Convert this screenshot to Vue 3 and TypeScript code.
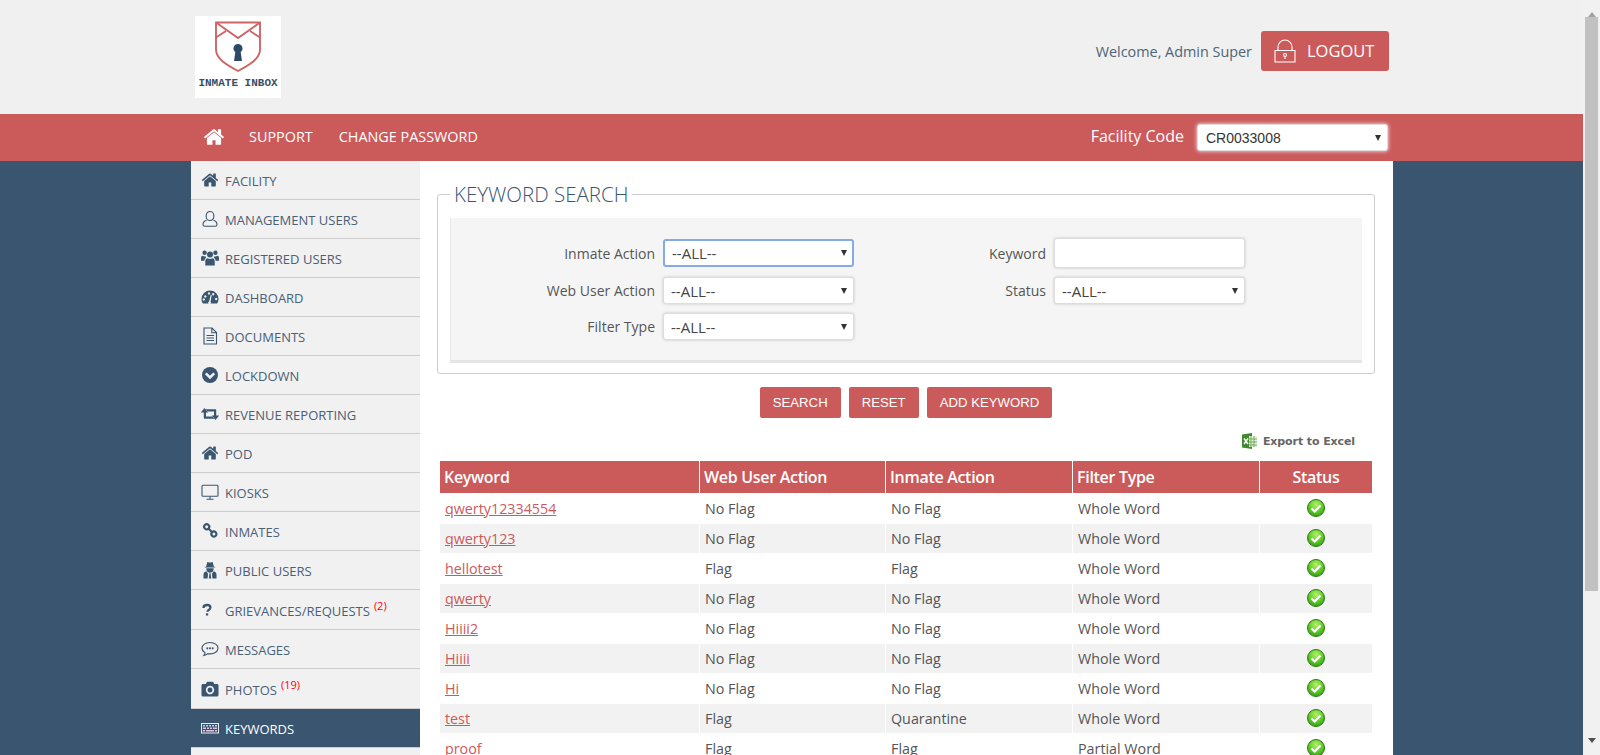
<script setup lang="ts">
type Shape = { d: string; stroke?: number; fill?: string };
type NavItem = { label: string; icon: string; count?: number; active?: boolean };
type Row = { keyword: string; web: string; inmate: string; filter: string };

const BG = '#f1f1f1';

// icons are hand drawn on an 18x18 box, the home one is on 1792 units
const HOME =
  'M1472 992v480q0 26-19 45t-45 19h-384v-384h-256v384h-384q-26 0-45-19t-19-45v-480q0-1 .5-3t.5-3l575-474 575 474q1 2 1 6zm223-69l-62 74q-8 9-21 11h-3q-13 0-21-7l-692-577-692 577q-12 8-24 7-13-2-21-11l-62-74q-8-10-7-23.5t11-21.5l719-599q32-26 76-26t76 26l244 204v-195q0-14 9-23t23-9h192q14 0 23 9t9 23v408l219 182q10 8 11 21.5t-7 23.5z';

const icons: Record<string, Shape[]> = {
  user: [
    { d: 'M9 1.500a3.800 3.800 0 0 1 3.800 3.800v1.400a3.800 3.800 0 0 1-7.600 0V5.300A3.800 3.800 0 0 1 9 1.500z', stroke: 1.1 },
    { d: 'M5.600 10.300C3.200 11 2 12.500 2 14.500c0 1.100.7 1.800 1.800 1.800h10.400c1.100 0 1.800-.7 1.800-1.800 0-2-1.200-3.500-3.600-4.200', stroke: 1.1 },
  ],
  users: [
    { d: 'M12 5.400a3 3 0 1 1-6 0 3 3 0 0 1 6 0z' },
    { d: 'M5.800 3.700a2.200 2.200 0 1 1-4.400 0 2.200 2.200 0 0 1 4.400 0zM16.600 3.700a2.200 2.200 0 1 1-4.400 0 2.200 2.200 0 0 1 4.400 0z' },
    { d: 'M4.300 16.500v-4.300c0-2 1.300-3 2.500-3 .6.500 1.300.8 2.200.8s1.600-.3 2.200-.8c1.200 0 2.500 1 2.500 3v4.300z' },
    { d: 'M0 11.800V8.800c0-1.200.8-2 1.800-2 .5.400 1.200.6 1.900.6.300 0 .6 0 .8-.1.100.700.400 1.300.8 1.800-1.200.3-1.800 1.300-1.900 2.700zM18 11.800V8.800c0-1.200-.8-2-1.800-2-.5.400-1.200.6-1.900.6-.3 0-.6 0-.8-.1-.1.700-.4 1.300-.8 1.800 1.200.3 1.800 1.300 1.900 2.700z' },
  ],
  dashboard: [
    { d: 'M9 2.500A8.500 8.500 0 0 0 .5 11c0 1.800.5 3.300 1.400 4.600h14.200c.9-1.300 1.400-2.800 1.400-4.600A8.500 8.500 0 0 0 9 2.500z' },
    { d: 'M4.300 7.300a1.200 1.200 0 1 1-.01 0zM2.800 10.300a1.200 1.200 0 1 1-.01 0zM8 4.200a1.200 1.200 0 1 1-.01 0zM12.200 5a1.200 1.200 0 1 1-.01 0zM15.200 9.800a1.200 1.200 0 1 1-.01 0z', fill: BG },
    { d: 'M8.100 13.400l1.600-6.600 1 .3-1.100 6.700a1.400 1.400 0 1 1-1.500-.4z', fill: BG },
  ],
  file: [
    { d: 'M3 1h8l4.500 4.500V17H3zM10.800 1v4.800h4.700', stroke: 1.1 },
    { d: 'M5.500 8.500h7.500M5.500 11h7.500M5.500 13.500h7.500', stroke: 1 },
  ],
  chevron: [
    { d: 'M17 9A8 8 0 1 1 1 9a8 8 0 0 1 16 0z' },
    { d: 'M4.800 7.400L9 11.400l4.200-4', stroke: 2.600, fill: BG },
  ],
  retweet: [
    { d: 'M3.500 3L7.200 7.400H5v4.100h6.400l1.900 2.300H3.700c-.5 0-.9-.4-.9-.9V7.400H-.2z' },
    { d: 'M14.500 15l-3.700-4.400H13V6.500H6.600L4.700 4.200h9.600c.5 0 .9.400.9.900v5.500h3z' },
  ],
  desktop: [
    { d: 'M1 3.300c0-.6.400-1 1-1h14c.6 0 1 .4 1 1v9c0 .6-.4 1-1 1H2c-.6 0-1-.4-1-1z', stroke: 1.1 },
    { d: 'M9 13.500v2.700M5.500 16.200h7', stroke: 1.1 },
  ],
  chain: [
    { d: 'M7.500 3c1 1 1 2.600 0 3.600s-2.600 1-3.600 0-1-2.600 0-3.600 2.600-1 3.600 0z', stroke: 2.100 },
    { d: 'M14.700 10.200c1 1 1 2.600 0 3.600s-2.600 1-3.600 0-1-2.600 0-3.600 2.600-1 3.600 0z', stroke: 2.100 },
    { d: 'M7.200 6.300l4.200 4.200', stroke: 2.100 },
  ],
  secret: [
    { d: 'M5.200 5.500l1-4c.1-.4.500-.5.900-.3.600.3 1.200.4 1.900.4s1.300-.1 1.900-.4c.4-.2.800-.1.900.3l1 4 1.900.9H3.300z' },
    { d: 'M5.300 7.200h7.400c0 1-.3 2.800-1.500 3.700-.6.500-1.400.8-2.200.8s-1.600-.3-2.200-.8C5.600 10 5.300 8.200 5.300 7.200z' },
    { d: 'M2.500 17.500v-3.800c0-2 1-3 2.900-3.500L7 12.800l-.4 4.700zM15.500 17.500v-3.800c0-2-1-3-2.900-3.500L11 12.800l.4 4.700zM8 12.500h2l-.3 1.300.5 3.700H7.800l.5-3.700z' },
  ],
  question: [
    { d: 'M2.500 7c0-1.800 1.500-3 3.500-3s3.400 1.100 3.400 2.600c0 1.300-.8 1.900-1.700 2.500-.8.500-1.200.9-1.200 1.700', stroke: 2.300 },
    { d: 'M4.900 12.300h2.300v2.200H4.900z' },
  ],
  comment: [
    { d: 'M9 2.500c4.500 0 8 2.500 8 5.700s-3.500 5.700-8 5.700c-.8 0-1.500-.1-2.200-.2-1 .9-2.400 1.600-4 1.800.7-.8 1.100-1.700 1.200-2.900C2.300 11.600 1 10 1 8.200c0-3.200 3.500-5.700 8-5.700z', stroke: 1.100 },
    { d: 'M6.300 7.300a1 1 0 1 1-.01 0zM9 7.300a1 1 0 1 1-.01 0zM11.700 7.300a1 1 0 1 1-.01 0z' },
  ],
  camera: [
    { d: 'M5.500 2.500c.2-.5.600-.8 1.100-.8h4.800c.5 0 .9.300 1.100.8l.7 1.500h2.800c.8 0 1.500.7 1.500 1.500v9.500c0 .8-.7 1.500-1.500 1.500H2c-.8 0-1.500-.7-1.500-1.500V5.500C.5 4.700 1.200 4 2 4h2.800z' },
    { d: 'M9 5.800a4.200 4.200 0 1 1-.01 0z', fill: BG },
    { d: 'M9 7.500a2.500 2.500 0 1 1-.01 0z' },
  ],
  keyboard: [
    { d: 'M0 4h18v10.500H0z', fill: '#e8ecf0' },
    { d: 'M1 5h16v8.500H1z', fill: '#3a556f' },
    { d: 'M2 6h2v1.500H2zM5 6h2v1.500H5zM8 6h2v1.500H8zM11 6h2v1.500h-2zM14 6h2v1.500h-2zM2 8.500h3V10H2zM6 8.500h2V10H6zM9 8.500h2V10H9zM12 8.500h4V10h-4zM2 11h2v1.500H2zM5 11h8v1.500H5zM14 11h2v1.500h-2z', fill: '#d9c8e0' },
  ],
};

const nav: NavItem[] = [
  { label: 'FACILITY', icon: 'home' },
  { label: 'MANAGEMENT USERS', icon: 'user' },
  { label: 'REGISTERED USERS', icon: 'users' },
  { label: 'DASHBOARD', icon: 'dashboard' },
  { label: 'DOCUMENTS', icon: 'file' },
  { label: 'LOCKDOWN', icon: 'chevron' },
  { label: 'REVENUE REPORTING', icon: 'retweet' },
  { label: 'POD', icon: 'home' },
  { label: 'KIOSKS', icon: 'desktop' },
  { label: 'INMATES', icon: 'chain' },
  { label: 'PUBLIC USERS', icon: 'secret' },
  { label: 'GRIEVANCES/REQUESTS', icon: 'question', count: 2 },
  { label: 'MESSAGES', icon: 'comment' },
  { label: 'PHOTOS', icon: 'camera', count: 19 },
  { label: 'KEYWORDS', icon: 'keyboard', active: true },
];

const rows: Row[] = [
  { keyword: 'qwerty12334554', web: 'No Flag', inmate: 'No Flag', filter: 'Whole Word' },
  { keyword: 'qwerty123', web: 'No Flag', inmate: 'No Flag', filter: 'Whole Word' },
  { keyword: 'hellotest', web: 'Flag', inmate: 'Flag', filter: 'Whole Word' },
  { keyword: 'qwerty', web: 'No Flag', inmate: 'No Flag', filter: 'Whole Word' },
  { keyword: 'Hiiii2', web: 'No Flag', inmate: 'No Flag', filter: 'Whole Word' },
  { keyword: 'Hiiii', web: 'No Flag', inmate: 'No Flag', filter: 'Whole Word' },
  { keyword: 'Hi', web: 'No Flag', inmate: 'No Flag', filter: 'Whole Word' },
  { keyword: 'test', web: 'Flag', inmate: 'Quarantine', filter: 'Whole Word' },
  { keyword: 'proof', web: 'Flag', inmate: 'Flag', filter: 'Partial Word' },
];
</script>

<template>
  <div class="page">
    <div class="main">
      <header class="top">
        <div class="top-inner">
          <div class="logo">
            <svg class="logo-mark" viewBox="0 0 46 52" width="46" height="52">
              <path d="M1 1.500h44v27c0 9-10 15-22 21.500C11 43.500 1 37.500 1 28.500z" fill="none" stroke="#cf6466" stroke-width="1.900" />
              <path d="M1 1.500l22 15.500 22-15.500M1 16.500l10-6.500M45 16.500l-10-6.500" fill="none" stroke="#cf6466" stroke-width="1.900" />
              <path d="M23 23a4.500 4.500 0 0 1 2.700 8.100L27 40H19l1.300-8.900A4.500 4.500 0 0 1 23 23z" fill="#2c4a68" />
            </svg>
            <span class="logo-text">INMATE INBOX</span>
          </div>
          <div class="account">
            <span class="welcome">Welcome, Admin Super</span>
            <button type="button" class="logout">
              <svg viewBox="0 0 22 24" width="22" height="24" fill="none" stroke="#fff" stroke-width="1.100">
                <path d="M1 11.500h20v11.500H1z" />
                <path d="M4 11.500V8a7 7 0 0 1 14 0v3.500" />
                <circle cx="11" cy="16" r="1.500" />
                <path d="M11 17.500v2.500" />
              </svg>
              <span class="logout-text">LOGOUT</span>
            </button>
          </div>
        </div>
      </header>

      <nav class="bar">
        <div class="bar-inner">
          <svg class="bar-home" viewBox="0 0 1792 1792" width="22" height="22"><path :d="HOME" fill="#fff" /></svg>
          <a class="bar-link">SUPPORT</a>
          <a class="bar-link">CHANGE PASSWORD</a>
          <span class="facility-label">Facility Code</span>
          <span class="pick pick-facility">
            <select><option>CR0033008</option></select>
          </span>
        </div>
      </nav>

      <div class="body">
        <aside class="side">
          <a
            v-for="item in nav"
            :key="item.label"
            class="side-item"
            :class="{ active: item.active, tall: item.count }"
          >
            <svg v-if="item.icon === 'home'" class="side-icon" viewBox="0 0 1792 1792"><path :d="HOME" /></svg>
            <svg v-else class="side-icon" viewBox="0 0 18 18">
              <path
                v-for="(s, i) in icons[item.icon]"
                :key="i"
                :d="s.d"
                :fill="s.stroke ? 'none' : s.fill"
                :stroke="s.stroke ? s.fill || 'currentColor' : 'none'"
                :stroke-width="s.stroke"
              />
            </svg>
            <span>{{ item.label }}</span>
            <sup v-if="item.count" class="count">({{ item.count }})</sup>
          </a>
        </aside>

        <main class="content">
          <fieldset class="search">
            <legend>KEYWORD SEARCH</legend>
            <div class="filters">
              <label>Inmate Action</label>
              <span class="pick focused"><select><option>--ALL--</option></select></span>
              <label>Keyword</label>
              <input type="text" />
              <label>Web User Action</label>
              <span class="pick"><select><option>--ALL--</option></select></span>
              <label>Status</label>
              <span class="pick"><select><option>--ALL--</option></select></span>
              <label>Filter Type</label>
              <span class="pick"><select><option>--ALL--</option></select></span>
            </div>
          </fieldset>

          <div class="actions">
            <button type="button">SEARCH</button>
            <button type="button">RESET</button>
            <button type="button">ADD KEYWORD</button>
          </div>

          <div class="export">
            <svg viewBox="0 0 16 16" width="16" height="16">
              <path d="M1 1.500L11 0v16L1 14.500z" fill="#3f8a2c" />
              <path d="M8 3h8v11H8z" fill="#e6f2df" />
              <path d="M10 3v11M13 3v11M8 6h8M8 9h8M8 12h8" stroke="#5aa040" stroke-width=".8" fill="none" />
              <path d="M3 5.500l4 5.500M7 5.500l-4 5.500" stroke="#fff" stroke-width="1.500" fill="none" />
            </svg>
            <span>Export to Excel</span>
          </div>

          <table class="grid">
            <colgroup>
              <col style="width: 259px" />
              <col style="width: 185px" />
              <col style="width: 186px" />
              <col style="width: 186px" />
              <col style="width: 112px" />
            </colgroup>
            <thead>
              <tr>
                <th>Keyword</th>
                <th>Web User Action</th>
                <th>Inmate Action</th>
                <th>Filter Type</th>
                <th class="center">Status</th>
              </tr>
            </thead>
            <tbody>
              <tr v-for="row in rows" :key="row.keyword">
                <td><a class="kw">{{ row.keyword }}</a></td>
                <td>{{ row.web }}</td>
                <td>{{ row.inmate }}</td>
                <td>{{ row.filter }}</td>
                <td class="center">
                  <svg class="ok" viewBox="0 0 18 18" width="18" height="18">
                    <defs>
                      <radialGradient id="okFill" cx="50%" cy="30%" r="75%">
                        <stop offset="0" stop-color="#b5f06a" />
                        <stop offset="0.55" stop-color="#5ecb24" />
                        <stop offset="1" stop-color="#2f9a12" />
                      </radialGradient>
                    </defs>
                    <circle cx="9" cy="9" r="8.500" fill="url(#okFill)" stroke="#2b7a17" stroke-width="1" />
                    <path d="M4.500 9.500l3.200 3 5.800-6" fill="none" stroke="#fff" stroke-width="2.200" />
                  </svg>
                </td>
              </tr>
            </tbody>
          </table>
        </main>
      </div>
    </div>

    <div class="scrollbar">
      <span class="arrow up"></span>
      <div class="track"><div class="thumb"></div></div>
      <span class="arrow down"></span>
    </div>
  </div>
</template>

<style>
html, body {
  margin: 0;
  height: 755px;
  overflow: hidden;
}
</style>

<style scoped>
.page {
  display: flex;
  height: 755px;
  overflow: hidden;
  font-family: "Open Sans", sans-serif;
  font-size: 14.3px;
  color: #555;
}
.main {
  width: 1583px;
  display: flex;
  flex-direction: column;
  background: #3a556f;
}

.top {
  height: 114px;
  background: #f0f0f0;
  flex: none;
}
.top-inner {
  margin-left: 195px;
  width: 1194px;
  display: flex;
  justify-content: space-between;
}
.logo {
  margin-top: 16px;
  width: 86px;
  height: 82px;
  background: #fff;
  display: flex;
  flex-direction: column;
  align-items: center;
  padding-top: 5px;
  box-sizing: border-box;
}
.logo-mark {
  flex: none;
}
.logo-text {
  margin-top: 4px;
  font-family: "Liberation Mono", monospace;
  font-weight: 700;
  font-size: 11px;
  line-height: 12px;
  color: #3a4f66;
  white-space: nowrap;
}
.account {
  margin-top: 31px;
  height: 40px;
  display: flex;
  align-items: center;
  gap: 9px;
}
.welcome {
  color: #4f6479;
  font-size: 14.4px;
}
.logout {
  width: 128px;
  height: 40px;
  padding: 0 0 0 13px;
  display: flex;
  align-items: center;
  gap: 11px;
  border: 0;
  border-radius: 3px;
  background: #cb5a5b;
  color: #fff;
  font-family: "Open Sans", sans-serif;
  font-size: 16.5px;
}
.logout-text {
  margin-bottom: 2px;
}

.bar {
  height: 47px;
  flex: none;
  background: #cb5a5b;
}
.bar-inner {
  margin-left: 203px;
  width: 1185px;
  height: 47px;
  display: flex;
  align-items: center;
  color: #fff;
}
.bar-home {
  margin-right: 24px;
  margin-bottom: 2px;
}
.bar-link {
  margin-right: 26px;
  margin-bottom: 3px;
  font-size: 14.4px;
  color: #fff;
}
.facility-label {
  margin-left: auto;
  margin-right: 13px;
  margin-bottom: 4px;
  font-size: 16px;
}

.pick {
  position: relative;
  display: block;
  align-self: center;
}
.pick select {
  display: block;
  width: 100%;
  height: 27px;
  box-sizing: border-box;
  padding: 0 20px 0 7px;
  appearance: none;
  border: 1px solid #ddd;
  border-radius: 3px;
  background: #fff;
  box-shadow: 0 0 3px rgba(0, 0, 0, 0.2);
  font-family: "Open Sans", sans-serif;
  font-size: 15px;
  color: #444;
  outline: none;
}
.pick::after {
  content: "";
  position: absolute;
  right: 7px;
  top: 11px;
  border-left: 3px solid transparent;
  border-right: 3px solid transparent;
  border-top: 6px solid #333;
}
.pick.focused select {
  height: 28px;
  border: 2px solid #86a9e8;
  padding-left: 7px;
  box-shadow: none;
}
.pick-facility {
  width: 191px;
}
.pick-facility select {
  height: 27px;
  font-family: "Liberation Sans", sans-serif;
  font-size: 14px;
  color: #333;
  padding-left: 8px;
  box-shadow: 0 0 4px rgba(255, 255, 255, 0.9);
}

.body {
  margin-left: 191px;
  width: 1202px;
  flex: 1;
  display: flex;
  min-height: 0;
}
.side {
  width: 229px;
  flex: none;
  background: #f1f1f1;
  color: #3a556f;
}
.side-item {
  height: 39px;
  box-sizing: border-box;
  display: flex;
  align-items: center;
  border-bottom: 1px solid #ccc;
  padding: 2px 0 0 10px;
  font-size: 13px;
  color: #4a6077;
}
.side-item.tall {
  height: 40px;
}
.side-item.active {
  background: #3a556f;
  color: #fff;
}
.side-icon {
  width: 18px;
  height: 18px;
  margin: -2px 6px 0 0;
  flex: none;
  fill: #3a556f;
  color: #3a556f;
}
.active .side-icon {
  color: #fff;
}
.count {
  margin-left: 4px;
  margin-top: -10px;
  color: #f00;
  font-size: 11px;
  line-height: 1;
  vertical-align: baseline;
}

.content {
  flex: 1;
  min-width: 0;
  background: #fff;
  padding: 20px 18px 0 17px;
  overflow: hidden;
}
.search {
  margin: 0;
  padding: 0 12px 10px;
  border: 1px solid #ccc;
  border-radius: 3px;
  height: 193px;
  box-sizing: border-box;
}
.search legend {
  margin-left: 0;
  padding: 0 4px;
  font-size: 20.5px;
  line-height: 26px;
  font-weight: 300;
  color: #3a556f;
}
.filters {
  display: grid;
  grid-template-columns: 203px 191px 182px 191px;
  gap: 9px;
  align-items: center;
  align-content: start;
  height: 145px;
  box-sizing: border-box;
  padding-top: 20px;
  margin-top: 11px;
  background: #f5f5f5;
  border-left: 1px solid #e8e8e8;
  border-bottom: 3px solid #e5e5e5;
}
.filters label {
  margin-right: -1px;
  text-align: right;
  font-size: 14px;
  color: #555;
}
.filters input {
  height: 30px;
  box-sizing: border-box;
  border: 1px solid #ddd;
  border-radius: 3px;
  background: #fff;
  box-shadow: 0 0 3px rgba(0, 0, 0, 0.2);
  outline: none;
}

.actions {
  margin-top: 13px;
  display: flex;
  justify-content: center;
  gap: 8px;
}
.actions button {
  height: 31px;
  padding: 0 13px;
  border: 0;
  border-radius: 2px;
  background: #cb5a5b;
  color: #fff;
  font-family: "Liberation Sans", sans-serif;
  font-size: 13.2px;
}

.export {
  margin-top: 15px;
  padding-right: 20px;
  height: 16px;
  display: flex;
  justify-content: flex-end;
  align-items: center;
  gap: 6px;
  font-family: "DejaVu Sans", sans-serif;
  font-size: 11px;
  font-weight: 700;
  letter-spacing: -0.1px;
  color: #666;
}

.grid {
  margin: 11px 0 0 2px;
  width: 934px;
  table-layout: fixed;
  border-collapse: separate;
  border-spacing: 1px;
}
.grid th {
  height: 32px;
  padding: 0 4px;
  background: #cb5a5b;
  color: #fff;
  font-size: 16px;
  font-weight: 600;
  letter-spacing: -0.3px;
  text-align: left;
}
.grid td {
  height: 29px;
  padding: 0 5px;
  color: #555;
}
.grid tbody tr:nth-child(even) td {
  background: #f2f2f2;
}
.grid .center {
  text-align: center;
}
.kw {
  color: #cb5a5b;
  text-decoration: underline;
}
.ok {
  display: block;
  margin: -1px auto 1px;
}

.scrollbar {
  width: 17px;
  flex: none;
  background: #f1f1f1;
  display: flex;
  flex-direction: column;
  align-items: center;
}
.track {
  flex: 1;
  width: 100%;
  display: flex;
  justify-content: center;
}
.thumb {
  width: 13px;
  height: 574px;
  background: #c1c1c1;
}
.arrow {
  height: 17px;
  flex: none;
  width: 0;
  box-sizing: border-box;
  border-left: 4px solid transparent;
  border-right: 4px solid transparent;
}
.arrow.up {
  border-bottom: 5px solid #a3a3a3;
  padding-top: 7px;
}
.arrow.down {
  border-top: 5px solid #505050;
}
</style>
